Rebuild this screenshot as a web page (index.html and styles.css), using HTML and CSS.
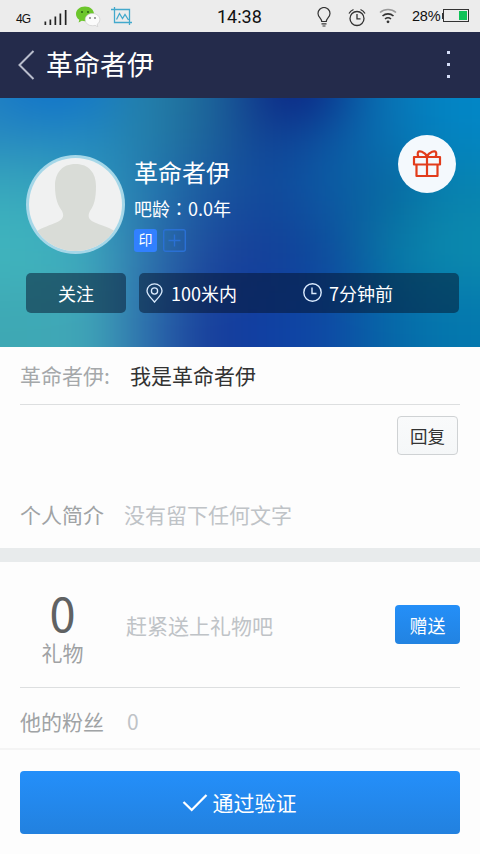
FILE: index.html
```
<!DOCTYPE html>
<html lang="zh-CN">
<head>
<meta charset="utf-8">
<title>革命者伊</title>
<link rel="stylesheet" href="styles.css">
</head>
<body>
<div class="status">
  <span class="net">4G</span>
  <svg class="signal" width="24" height="17" viewBox="0 0 24 17" fill="#222"><path d="M.5 12.500h1.700V16H.5zM5.500 10.500h1.700V16H5.500zM10.500 7.500h1.700V16h-1.700zM15.500 4.500h1.700V16h-1.700zM20.800 1h1.700v15h-1.700z"/></svg>
  <svg class="wechat" width="26" height="22" viewBox="0 0 26 22"><path d="M10 .5C4.800.5 1 3.900 1 8c0 2.400 1.200 4.400 3.300 5.800L3.600 16.500l3.200-1.700c1 .3 2 .4 3.200.4 5.200 0 9-3.200 9-7.200S15.200.5 10 .5z" fill="#6cc62c"/><circle cx="7" cy="6" r="1.100" fill="#2c6614"/><circle cx="13" cy="6" r="1.100" fill="#2c6614"/><path d="M17.500 7.500c-4.300 0-7.300 2.700-7.300 6.100s3 6.100 7.300 6.100c.9 0 1.700-.1 2.500-.4l2.800 1.400-.6-2.500c1.700-1.100 2.600-2.700 2.600-4.600 0-3.400-3-6.100-7.300-6.100z" fill="#fbfbfb" stroke="#c8c8c8" stroke-width=".6"/><circle cx="15" cy="12" r=".9" fill="#777"/><circle cx="20" cy="12" r=".9" fill="#777"/></svg>
  <svg class="shot" width="22" height="18" viewBox="0 0 22 18" fill="none" stroke="#43a9cc" stroke-width="1.300"><path d="M0 2.500h18.500V18M3.500 0v15.500H21M5.500 12.500l3-6 3 5 2.500-4 3.500 5.500"/></svg>
  <span class="time">14:38</span>
  <svg class="bulb" width="14" height="20" viewBox="0 0 14 20" fill="none" stroke="#333" stroke-width="1.200"><path d="M4.700 14.500c0-3-3.700-4.300-3.700-8a6 6 0 0 1 12 0c0 3.700-3.700 5-3.700 8zM4.500 16.800h5M5.500 19h3"/></svg>
  <svg class="alarm" width="18" height="19" viewBox="0 0 18 19" fill="none" stroke="#333" stroke-width="1.300"><circle cx="9" cy="10.500" r="7"/><path d="M9 6v4.800h3.500M1 5.500a9 9 0 0 1 4.500-4M17 5.500a9 9 0 0 0-4.500-4"/></svg>
  <svg class="wifi" width="18" height="16" viewBox="0 0 18 16" fill="none" stroke="#333" stroke-width="1.600"><path d="M1 4.500a12 12 0 0 1 16 0" stroke="#999"/><path d="M3.500 8a8.300 8.300 0 0 1 11 0M6 11a4.700 4.700 0 0 1 6 0"/><circle cx="9" cy="13.800" r="1.400" fill="#333" stroke="none"/></svg>
  <span class="percent">28%</span>
  <svg class="battery" width="28" height="14" viewBox="0 0 28 14"><path d="M0 4h1v6H0z" fill="#333"/><rect x="1.500" y=".5" width="25" height="12" fill="none" stroke="#333"/><path d="M17 2h8v9h-8z" fill="#0fc257"/></svg>
</div>

<header class="bar">
  <svg class="back" width="17" height="30" viewBox="0 0 17 30" fill="none" stroke="#b9bdcc" stroke-width="2"><path d="M15.500 1L1.500 15l14 14"/></svg>
  <h1>革命者伊</h1>
  <div class="dots"><i></i><i></i><i></i></div>
</header>

<section class="hero">
  <svg class="hero-bg" width="480" height="249" viewBox="0 0 480 249">
    <defs><filter id="soft" filterUnits="userSpaceOnUse" x="-140" y="-140" width="760" height="529" color-interpolation-filters="sRGB"><feGaussianBlur stdDeviation="29"/></filter></defs>
    <g filter="url(#soft)">
      <path fill="#2585c0" d="M-140-140H62V62h-202z"/><path fill="#2388c0" d="M60-140h62V62H60z"/><path fill="#2480a8" d="M120-140h62V62h-62z"/><path fill="#1c6498" d="M180-140h62V62h-62z"/><path fill="#114094" d="M240-140h62V62h-62z"/><path fill="#0c58a4" d="M300-140h62V62h-62z"/><path fill="#0874b4" d="M360-140h62V62h-62z"/><path fill="#0286c6" d="M420-140h202V62H420z"/>
      <path fill="#38a8bc" d="M-140 60H62v64h-202z"/><path fill="#2f98bc" d="M60 60h62v64H60z"/><path fill="#2478b0" d="M120 60h62v64h-62z"/><path fill="#1a58a0" d="M180 60h62v64h-62z"/><path fill="#10489c" d="M240 60h62v64h-62z"/><path fill="#0c5ca4" d="M300 60h62v64h-62z"/><path fill="#08669e" d="M360 60h62v64h-62z"/><path fill="#0882ae" d="M420 60h202v64H420z"/>
      <path fill="#40b6be" d="M-140 122H62v64h-202z"/><path fill="#3ea8be" d="M60 122h62v64H60z"/><path fill="#2e72ac" d="M120 122h62v64h-62z"/><path fill="#1d489c" d="M180 122h62v64h-62z"/><path fill="#143e98" d="M240 122h62v64h-62z"/><path fill="#0e4c9c" d="M300 122h62v64h-62z"/><path fill="#087aa6" d="M360 122h62v64h-62z"/><path fill="#0c8cae" d="M420 122h202v64H420z"/>
      <path fill="#3ea8b4" d="M-140 184H62v206h-202z"/><path fill="#40a6b8" d="M60 184h62v206H60z"/><path fill="#2c6cac" d="M120 184h62v206h-62z"/><path fill="#183c9a" d="M180 184h62v206h-62z"/><path fill="#0f40a4" d="M240 184h62v206h-62z"/><path fill="#0e4aa4" d="M300 184h62v206h-62z"/><path fill="#0668a8" d="M360 184h62v206h-62z"/><path fill="#0478ae" d="M420 184h202v206H420z"/>
      <ellipse cx="300" cy="-16" rx="48" ry="36" fill="#0b2080"/><ellipse cx="55" cy="-20" rx="60" ry="34" fill="#0c70cc"/>
    </g>
  </svg>
  <div class="profile">
    <svg class="avatar" width="99" height="99" viewBox="0 0 99 99"><defs><clipPath id="face"><circle cx="49.500" cy="49.500" r="46.500"/></clipPath></defs><circle cx="49.500" cy="49.500" r="49.500" fill="#a5d7e8"/><circle cx="49.500" cy="49.500" r="46.500" fill="#f0f1f1"/><path clip-path="url(#face)" fill="#d9dcd7" d="M49.500 9C36 9 29 18 29 31c0 13 3 19 7 25 3 6 0 9-7 12-8 3.500-15 5-20 10v21h81V77c-5-4-12-5.500-20-9-7-3-9-6-6-12 4-6 6-12 6-25C70 18 63 9 49.500 9z"/></svg>
    <div class="info">
      <div class="name">革命者伊</div>
      <div class="age">吧龄<span class="colon" lang="zh-TW">：</span>0.0年</div>
      <div class="badges"><span class="badge">印</span><svg width="23" height="23" viewBox="0 0 23 23" fill="none" stroke="#2a70d4" stroke-width="1.400"><rect x=".7" y=".7" width="21.600" height="21.600" rx="2"/><path d="M5.500 11.500h12M11.500 5.500v12"/></svg></div>
    </div>
    <div class="gift"><svg width="30" height="30" viewBox="0 0 30 30" fill="none" stroke="#e23c1b" stroke-width="2.200" stroke-linejoin="round"><path d="M2 8h26v7.500H2zM4.500 15.500h21V27h-21zM15 8v19M15 7.500C13 3 6.500.500 5.800 4c-.4 2 .2 2.700.8 4M15 7.500C17 3 23.500.500 24.200 4c.4 2-.2 2.700-.8 4"/></svg></div>
  </div>
  <div class="actions">
    <div class="pill follow">关注</div>
    <div class="pill where">
      <svg class="pin" width="17" height="20" viewBox="0 0 17 20" fill="none" stroke="#dcecff" stroke-width="1.300"><path d="M8.500 19C5.500 15 1 12 1 7.800a7.500 7 0 0 1 15 0C16 12 11.500 15 8.500 19z"/><circle cx="8.500" cy="8" r="3.100"/></svg>
      <span class="dist">100米内</span>
      <svg class="clock" width="19" height="19" viewBox="0 0 19 19" fill="none" stroke="#dcecff" stroke-width="1.400"><circle cx="9.500" cy="9.500" r="8.700"/><path d="M9 4.500v6h4.500"/></svg>
      <span>7分钟前</span>
    </div>
  </div>
</section>

<section class="message"><span class="from">革命者伊:</span><span class="text">我是革命者伊</span></section>
<div class="reply-row"><div class="reply">回复</div></div>
<section class="intro"><span class="label">个人简介</span><span class="hint">没有留下任何文字</span></section>
<div class="divider"></div>
<section class="gifts">
  <div class="count"><b>0</b><span>礼物</span></div>
  <div class="hint">赶紧送上礼物吧</div>
  <div class="send">赠送</div>
</section>
<section class="fans"><span class="label">他的粉丝</span><span class="hint">0</span></section>
<footer class="footer">
  <div class="pass"><svg width="26" height="20" viewBox="0 0 26 20" fill="none" stroke="#fff" stroke-width="2.300"><path d="M1.500 9l8.200 8L24.500 2"/></svg><span>通过验证</span></div>
</footer>
</body>
</html>
```
FILE: styles.css
```
* { box-sizing: border-box; }
body {
  margin: 0;
  width: 480px;
  height: 854px;
  overflow: hidden;
  background: #fdfdfd;
  font-family: "Noto Sans CJK SC", sans-serif;
  font-size: 21px;
  line-height: 28px;
  white-space: nowrap;
}
svg { display: block; flex: none; }

.status {
  display: flex;
  align-items: flex-start;
  height: 32px;
  padding-left: 16px;
  background: #ececec;
  color: #111;
}
.net { width: 28px; padding-top: 11px; font: 12px/16px "Liberation Sans", sans-serif; letter-spacing: -.8px; }
.signal { margin-top: 9px; }
.wechat { margin: 6px 0 0 7px; }
.shot { margin: 7px 0 0 10px; }
.time { width: 45px; margin-left: 84px; padding-top: 6px; font: 18px/22px Roboto, sans-serif; }
.bulb { margin: 7px 0 0 55px; }
.alarm { margin: 8px 0 0 17px; }
.wifi { margin: 8px 0 0 13px; }
.percent { width: 30px; margin-left: 15px; padding-top: 7px; font: 14.500px/18px "Liberation Sans", sans-serif; letter-spacing: -.2px; }
.battery { margin-top: 9px; }

.bar { display: flex; align-items: center; height: 66px; padding: 0 30px 0 18px; background: #242b4b; }
h1 { flex: 1; margin: -2px 0 0 11px; color: #fff; font-size: 27px; font-weight: 400; line-height: 40px; }
.dots { display: flex; flex-direction: column; gap: 9px; width: 3px; margin-top: -1px; }
.dots i { width: 3px; height: 3px; background: #d5ddf8; }

.hero { position: relative; height: 249px; padding: 57px 21px 0 26px; overflow: hidden; color: #fff; background: #1c509c; }
.hero-bg { position: absolute; left: 0; top: 0; }
.profile, .actions { position: relative; display: flex; }
.profile { height: 99px; }
.info { flex: 1; margin-left: 9px; }
.name { height: 36px; font-size: 24px; line-height: 34px; }
.age { height: 26px; font-size: 18px; line-height: 24px; margin-top: 5px; }
.colon { font-family: "Noto Sans CJK TC", sans-serif; line-height: 1; }
.badges { display: flex; gap: 6px; margin-top: 7px; }
.badge { width: 23px; height: 23px; border-radius: 3px; background: #3180ff; font-size: 14px; line-height: 21px; text-align: center; }
.gift { display: flex; align-items: center; justify-content: center; width: 58px; height: 58px; margin: -20px 3px 0 0; border-radius: 50%; background: #f4f9fd; }
.actions { gap: 13px; margin-top: 19px; }
.pill { height: 40px; border-radius: 5px; background: rgba(3, 18, 42, .5); font-size: 18px; line-height: 40px; }
.follow { width: 100px; text-align: center; }
.where { display: flex; flex: 1; align-items: center; padding-left: 7px; }
.dist { width: 132px; margin-left: 8px; }
.clock { margin: -2px 7px 0 0; }

.message { display: flex; height: 58px; margin: 0 20px; padding-top: 14px; border-bottom: 1px solid #dddfe0; }
.from { width: 110px; color: #a5a8aa; }
.text { color: #333; }
.reply-row { display: flex; justify-content: flex-end; height: 95px; padding: 11px 22px 0 0; }
.reply { width: 61px; height: 39px; border: 1px solid #cfd2d4; border-radius: 4px; background: linear-gradient(#f9fafb, #f5f7f8); color: #333; font-size: 17.500px; line-height: 38px; text-align: center; }
.intro { display: flex; height: 48px; padding-left: 20px; }
.label { width: 104px; color: #a0a3a5; }
.hint { color: #bfc3c7; }
.divider { height: 14px; background: #e8ebec; }
.gifts { display: flex; height: 126px; margin: 0 20px; border-bottom: 1px solid #dddfe0; }
.count { display: flex; flex-direction: column; align-items: center; width: 85px; padding-top: 24px; color: #9fa2a4; }
.count b { color: #606263; font-size: 47px; font-weight: 400; line-height: 52px; }
.gifts .hint { flex: 1; margin: 49px 0 0 21px; }
.send { width: 65px; height: 39px; margin-top: 43px; border-radius: 4px; background: linear-gradient(#248ff8, #2283e1); color: #fff; font-size: 18px; line-height: 40px; text-align: center; }
.fans { display: flex; height: 62px; padding: 19px 0 0 20px; border-bottom: 2px solid #f4f4f4; }
.fans .hint { margin-left: 3px; }
.footer { padding: 21px 20px 0; }
.pass { display: flex; align-items: center; justify-content: center; gap: 5px; height: 63px; padding-right: 2px; border-radius: 4px; background: linear-gradient(#248ffa, #2281df); color: #fff; }
.pass span { line-height: 63px; }
```
